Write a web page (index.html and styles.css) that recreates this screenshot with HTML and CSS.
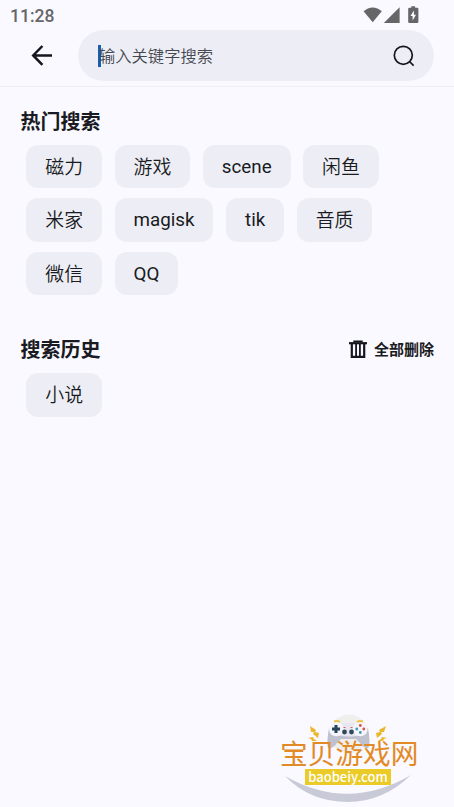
FILE: index.html
```html
<!DOCTYPE html>
<html lang="zh-CN">
<head>
    <meta charset="UTF-8">
    <meta name="viewport" content="width=device-width, initial-scale=1.0">
    <title>搜索</title>
    <link rel="stylesheet" href="styles.css">
</head>
<body>
    <!-- Status bar -->
    <div class="status-bar">
        <span class="clock">11:28</span>
        <svg class="status-icons" width="58" height="20" viewBox="0 0 58 20" fill="#666668">
            <path d="M0.6 6.3C6 1.1 13.4 1.1 18.8 6.3L9.7 17.2Z"/>
            <path d="M36.6 2.2V18H20.8Z"/>
            <path d="M48.3 1.2h3.8v1.6h2.2q1.1 0 1.1 1.1v12.8q0 1.2-1.2 1.2h-7.8q-1.2 0-1.2-1.2V3.9q0-1.1 1.1-1.1h2z"/>
            <path d="M50.9 5.4v4.3h2.1l-3.4 5.8v-4.4h-2.1z" fill="#fff"/>
        </svg>
    </div>

    <!-- Search -->
    <header class="header">
        <svg class="back" width="24" height="24" viewBox="0 0 24 24" fill="none" stroke="#15161e" stroke-width="2.5">
            <path d="M22 12.4H4M12.4 3L3.2 12.4L12.4 21.8"/>
        </svg>
        <div class="search">
            <span class="placeholder">输入关键字搜索</span>
            <svg class="search-icon" width="24" height="24" viewBox="0 0 24 24" fill="none" stroke="#15161e" stroke-width="1.7">
                <circle cx="11.3" cy="11.3" r="9"/>
                <path d="M17.5 17.5L21.6 21.6"/>
            </svg>
        </div>
    </header>

    <main>
        <section class="hot">
            <h2>热门搜索</h2>
            <div class="chips">
                <span class="chip">磁力</span>
                <span class="chip">游戏</span>
                <span class="chip latin">scene</span>
                <span class="chip">闲鱼</span>
                <span class="chip">米家</span>
                <span class="chip latin">magisk</span>
                <span class="chip latin">tik</span>
                <span class="chip">音质</span>
                <span class="chip">微信</span>
                <span class="chip latin">QQ</span>
            </div>
        </section>

        <section class="history">
            <div class="section-head">
                <h2>搜索历史</h2>
                <div class="clear">
                    <svg width="18" height="20" viewBox="0 0 18 20" fill="none" stroke="#15161e">
                        <path d="M0 3.2H18" stroke-width="2.2"/>
                        <path d="M5.2 2.5V1.3H12.8V2.5" stroke-width="1.8"/>
                        <path d="M2.8 3V16.8H15.2V3" stroke-width="2.2"/>
                        <path d="M7.1 4V16M10.9 4V16" stroke-width="1.8"/>
                    </svg>
                    <span>全部删除</span>
                </div>
            </div>
            <div class="chips">
                <span class="chip">小说</span>
            </div>
        </section>
    </main>

    <!-- Site badge -->
    <div class="site-badge">
        <svg class="badge-art" width="146" height="92" viewBox="0 0 146 92">
            <circle cx="69" cy="20" r="19.5" fill="#efefee"/>
            <path d="M5 62Q68 98 131 61Q103 88 68 88Q30 88 5 62Z" fill="#c8cad8"/>
            <path d="M49 14Q46 32 48.5 34Q53 35 57 29L61 25H76L80 29Q84 35 88 34Q91 32 88 14Z" fill="#bfc1cf"/>
            <path d="M57 9H80V21Q69 24 57 21Z" fill="#e6e7f0"/>
            <circle cx="56.3" cy="15" r="7.3" fill="#f5f5fb"/>
            <circle cx="80.3" cy="15" r="7.3" fill="#f5f5fb"/>
            <path d="M54 7.5Q57 6.3 60 7.8M77 7.8Q80 6.3 83 7.5" stroke="#e9c446" stroke-width="2" fill="none"/>
            <path d="M52 15H60M56 11V19" stroke="#27455a" stroke-width="3"/>
            <circle cx="76.8" cy="15" r="1.4" fill="#3c9bb5"/>
            <circle cx="80.3" cy="18.5" r="1.4" fill="#3c9bb5"/>
            <circle cx="80.3" cy="11.5" r="1.4" fill="#db5050"/>
            <circle cx="83.8" cy="15" r="1.4" fill="#db5050"/>
            <circle cx="64.5" cy="18" r="2.4" fill="#30475c"/>
            <circle cx="71.5" cy="18" r="2.4" fill="#30475c"/>
            <path d="M63.5 13.5h2M70.5 13.5h2" stroke="#d65d65"/>
            <path d="M30 12L36 16L35 18L39 19L38 24L33 20L34 18L31 18ZM28 24L33 23L34 25L37 27L32 27L31 25Z" fill="#eeb62d"/>
            <path d="M106 12L99 16L100 18L96 19L97 24L102 20L101 18L104 18ZM107 24L102 23L101 25L98 27L103 27L104 25Z" fill="#eeb62d"/>
        </svg>
        <div class="badge-name">宝贝游戏网</div>
        <div class="badge-url">baobeiy.com</div>
    </div>
</body>
</html>
```

FILE: styles.css
```css
* {
    box-sizing: border-box;
}

body {
    position: relative;
    margin: 0;
    height: 807px;
    overflow: hidden;
    background-color: #faf9ff;
    color: #191a22;
    font-family: Roboto, "Noto Sans CJK SC", sans-serif;
}

svg {
    display: block;
    flex: none;
}

.status-bar {
    display: flex;
    justify-content: space-between;
    height: 30px;
    padding: 5px 34px 0 10px;
}

.clock {
    color: #666668;
    font-size: 17.5px;
    font-weight: 500;
    line-height: 22px;
}

.status-icons {
    margin-right: -1px;
}

.header {
    display: flex;
    height: 57px;
    padding: 0 20px 0 30px;
    border-bottom: 1px solid #eeeef4;
}

.back {
    margin: 13px 24px 0 0;
}

.search {
    display: flex;
    flex: 1;
    align-items: center;
    justify-content: space-between;
    height: 51px;
    padding: 0 18px 0 20px;
    border-radius: 26px;
    background-color: #edeef5;
}

.placeholder {
    height: 22px;
    border-left: 3px solid #1a5cad;
    color: #454751;
    font-size: 16.3px;
    font-weight: 350;
    line-height: 24px;
    text-indent: -2px;
}

h2 {
    margin: 0;
    font-size: 20px;
    font-weight: 700;
    line-height: 30px;
    text-indent: 0.5px;
}

.hot {
    padding: 20px 20px 0;
}

.history {
    padding: 40.5px 20px 0;
}

.section-head,
.clear {
    display: flex;
    align-items: center;
    justify-content: space-between;
}

.clear {
    gap: 7px;
    font-size: 15px;
    font-weight: 700;
    line-height: 22px;
}

.chips {
    display: flex;
    flex-wrap: wrap;
    gap: 10.2px 12.7px;
    padding: 8px 6px 0 6.4px;
}

.chip {
    height: 43.2px;
    padding: 0 18.9px;
    border-radius: 12px;
    background-color: #edeef5;
    font-size: 18.9px;
    font-weight: 350;
    line-height: 45px;
}

.latin {
    font-size: 18.8px;
    font-weight: 400;
}

/* Overlays the bottom right corner of the page */
.site-badge {
    position: absolute;
    right: 28px;
    bottom: 1px;
    width: 146px;
    height: 92px;
}

.badge-art {
    position: absolute;
    top: 0;
    left: 0;
}

.badge-name {
    position: relative;
    height: 55px;
    padding-top: 27px;
    color: #e28a26;
    font-size: 27.7px;
    line-height: 28px;
    white-space: nowrap;
}

.badge-url {
    position: relative;
    width: 86px;
    height: 16px;
    margin-left: 25px;
    background-color: #eacb28;
    color: #fff;
    font-family: "Noto Sans CJK SC", sans-serif;
    font-size: 13px;
    font-weight: 500;
    line-height: 15px;
    text-align: center;
}
```
